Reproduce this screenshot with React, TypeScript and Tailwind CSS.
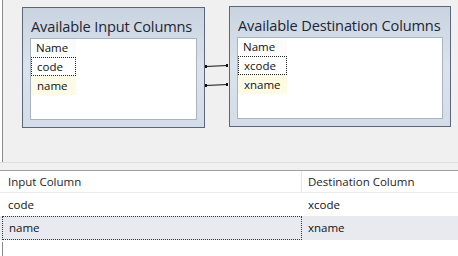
import React from "react";

const font = { fontFamily: '"Open Sans", "Noto Sans", sans-serif' };

function ColumnBox({ title, rows, width, rowWidth }: { title: string; rows: string[]; width: string; rowWidth: string }) {
  return (
    <div className={`${width} h-[121px] border border-[#5b6676] bg-gradient-to-b from-[#c9d4e1] via-[#dbe3ec] to-[#d3dce8] p-[1px] flex flex-col`}>
      <div className="h-[29px] pl-[7px] pt-[7px] text-[14.6px] leading-[20px] text-[#1d2633] tracking-[-0.15px] whitespace-nowrap">{title}</div>
      <div className="mx-[6px] mb-[6px] flex-1 border border-[#a7b4c4] bg-white flex flex-col">
        <div className={`${rowWidth} h-[18px] pl-[5px] text-[11.5px] leading-[18px] text-[#111] bg-gradient-to-r from-white to-[#fbfbfb]`}>Name</div>
        <div className={`${rowWidth} h-[19px] pl-[5px] text-[11.5px] leading-[17px] text-[#111] border border-dotted border-[#222]`}>{rows[0]}</div>
        <div className={`${rowWidth} h-[19px] pl-[6px] text-[11.5px] leading-[19px] text-[#111] bg-[#fdfbe6]`}>{rows[1]}</div>
      </div>
    </div>
  );
}

function Connectors() {
  return (
    <svg width="24" height="121" className="shrink-0" viewBox="0 0 24 121">
      <g stroke="#111" strokeWidth="1.2" fill="#111">
        <line x1="0" y1="59.5" x2="23" y2="58.5" />
        <line x1="0" y1="78.5" x2="23" y2="77.5" />
      </g>
      <g fill="#111">
        <rect x="0" y="58" width="2" height="3" />
        <rect x="21" y="57" width="2" height="3" />
        <rect x="0" y="77" width="2" height="3" />
        <rect x="21" y="76" width="2" height="3" />
      </g>
    </svg>
  );
}

export default function App() {
  return (
    <div className="w-[458px] h-[256px] bg-white overflow-hidden flex flex-col" style={font}>
      <div className="h-[162px] bg-[#f0f0f0] border-l border-[#8a8a8a] ml-[2px] pl-[19px] pt-[6px] flex items-start">
        <div className="mt-[1px]">
          <ColumnBox title="Available Input Columns" rows={["code", "name"]} width="w-[183px]" rowWidth="w-[45px]" />
        </div>
        <div className="mt-[1px]">
          <Connectors />
        </div>
        <ColumnBox title="Available Destination Columns" rows={["xcode", "xname"]} width="w-[222px]" rowWidth="w-[49px]" />
      </div>
      <div className="h-[8px] bg-[#f0f0f0] border-t border-[#dedede]" />
      <div className="h-[1px] bg-[#a0a0a0]" />
      <div className="flex h-[22px] bg-white border-b border-[#ececec] text-[11.5px] leading-[21px] text-[#1e1e1e]">
        <div className="w-[302px] pl-[8px] border-r border-[#e6e6e6]">Input Column</div>
        <div className="flex-1 pl-[6px]">Destination Column</div>
      </div>
      <div className="flex h-[23px] bg-white text-[11.5px] leading-[23px] text-[#111]">
        <div className="w-[302px] pl-[8px]">code</div>
        <div className="flex-1 pl-[6px]">xcode</div>
      </div>
      <div className="flex h-[24px] bg-[#e9eaf0] text-[11.5px] text-[#111]">
        <div className="w-[300px] ml-[2px] pl-[6px] border border-dotted border-[#333] leading-[22px]">name</div>
        <div className="flex-1 pl-[6px] leading-[24px]">xname</div>
      </div>
      <div className="flex-1 bg-white flex items-end">
        <div className="ml-[2px] w-[1px] h-[14px] bg-[#8a8a8a]" />
      </div>
    </div>
  );
}
